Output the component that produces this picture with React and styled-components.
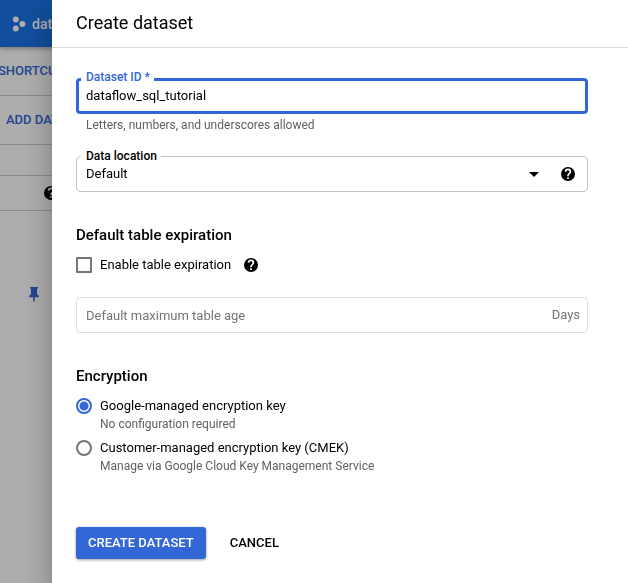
// Create dataset drawer

import React, { useState } from 'react';
import styled, { createGlobalStyle, css } from 'styled-components';

const BLUE = '#3367d6';

const GlobalStyle = createGlobalStyle`
  * {
    box-sizing: border-box;
  }

  body {
    margin: 0;
    overflow: hidden;
    background: #ffffff;
    color: #000000;
    font-family: Roboto, 'Liberation Sans', sans-serif;
    font-size: 13px;
    line-height: 18px;
  }

  button,
  input,
  select {
    font: inherit;
    color: inherit;
  }
`;

// Console page, behind the drawer

const Console = styled.div`
  min-height: 100vh;
`;

const TopBar = styled.header`
  position: relative;
  display: flex;
  align-items: center;
  height: 47px;
  padding-left: 12px;
  background: #1a73e8;
  color: #ffffff;
  box-shadow: 0 2px 4px rgba(0, 0, 0, 0.3);
`;

const ProjectButton = styled.button`
  display: flex;
  align-items: center;
  gap: 6px;
  padding: 0;
  border: 0;
  background: none;
  font-size: 14px;
  font-weight: 500;
`;

const Strip = styled.div`
  display: flex;
  align-items: center;
  height: ${({ $height }) => $height}px;
  padding-left: ${({ $indent }) => $indent || 0}px;
  border-bottom: 1px solid #cccccc;
`;

const StripLink = styled.a`
  color: ${BLUE};
  font-weight: 500;
  text-decoration: none;
`;

const Shortcuts = styled(Strip)`
  margin-left: -2px;
`;

const Resources = styled.div`
  padding: 76px 0 0 28px;
`;

const Backdrop = styled.div`
  position: fixed;
  inset: 0;
  background: rgba(0, 0, 0, 0.32);
`;

// Drawer

const Drawer = styled.form`
  position: fixed;
  inset: 0 0 0 52px;
  overflow: hidden auto;
  background: #ffffff;
  box-shadow: 0 8px 10px -5px rgba(0, 0, 0, 0.2),
    0 16px 24px 2px rgba(0, 0, 0, 0.14), 0 6px 30px 5px rgba(0, 0, 0, 0.12);
`;

const DrawerHeader = styled.header`
  display: flex;
  align-items: center;
  height: 48px;
  padding: 0 24px 2px;
  border-bottom: 1px solid #dadada;
`;

const Title = styled.h1`
  margin: 0;
  font-size: 18px;
  font-weight: 400;
  line-height: 24px;
`;

const DrawerBody = styled.div`
  padding: 30px 40px 24px 24px;
`;

const Field = styled.div`
  position: relative;
  display: flex;
  align-items: center;
  height: 36px;
  border: 1px solid #c4c4c4;
  border-radius: 4px;

  ${({ $focused }) =>
    $focused &&
    css`
      border: 3px solid ${BLUE};
    `}

  ${({ $disabled }) =>
    $disabled &&
    css`
      border-color: #e0e0e0;
      color: #757575;
    `}
`;

const FieldLabel = styled.label`
  position: absolute;
  top: ${({ $focused }) => ($focused ? -13 : -10)}px;
  left: ${({ $focused }) => ($focused ? 2 : 4)}px;
  padding: 0 4px 0 5px;
  background: #ffffff;
  color: ${({ $focused }) => ($focused ? BLUE : 'inherit')};
  font-size: 12px;
  font-weight: 500;
`;

const TextInput = styled.input`
  flex: 1;
  min-width: 0;
  height: 100%;
  padding: 0 ${({ $inset }) => $inset}px ${({ $inset }) => ($inset === 7 ? 2 : 0)}px;
  border: 0;
  outline: 0;
  background: none;

  &::placeholder {
    color: #757575;
    opacity: 1;
  }
`;

const Select = styled.select`
  flex: 1;
  min-width: 0;
  height: 100%;
  padding: 0 9px;
  border: 0;
  outline: 0;
  background: none;
  appearance: none;
`;

const SelectArrow = styled.svg`
  flex: none;
  margin-right: 22px;
  pointer-events: none;
`;

const Suffix = styled.span`
  padding-right: 7px;
`;

const Hint = styled.p`
  margin: 0;
  padding: 2px 10px 0;
  color: #616161;
  font-size: 12px;
`;

const FieldGroup = styled.div`
  display: grid;
  gap: 22px;
`;

const HelpButton = styled.button`
  display: flex;
  flex: none;
  padding: 0;
  border: 0;
  background: none;
  margin-right: ${({ $end }) => ($end ? 12 : 0)}px;
`;

const Section = styled.section`
  padding-top: 32px;
`;

const SectionTitle = styled.h2`
  margin: 0 0 10px;
  font-size: 15px;
  font-weight: 500;
  line-height: 22px;
`;

const OptionRow = styled.div`
  display: flex;
  align-items: center;
  gap: 13px;
  margin-bottom: 23px;
`;

const Option = styled.label`
  display: grid;
  grid-template-columns: 16px auto;
  align-items: center;
  column-gap: 8px;
`;

const Options = styled.div`
  display: grid;
  justify-items: start;
  gap: 6px;
`;

const OptionHint = styled.span`
  grid-column: 2;
  color: #616161;
  font-size: 12px;
`;

const Checkbox = styled.input.attrs({ type: 'checkbox' })`
  appearance: none;
  width: 16px;
  height: 16px;
  margin: 0;
  border: 2px solid #757575;
  border-radius: 1px;

  &:checked {
    border-color: ${BLUE};
    background: ${BLUE};
  }
`;

const Radio = styled.input.attrs({ type: 'radio' })`
  appearance: none;
  width: 16px;
  height: 16px;
  margin: 0;
  border: 2px solid #757575;
  border-radius: 50%;

  &:checked {
    border-color: ${BLUE};
    background: radial-gradient(circle, ${BLUE} 4px, transparent 5px);
  }
`;

const Actions = styled.div`
  display: flex;
  gap: 12px;
  padding-top: 52px;
`;

const Button = styled.button`
  height: 32px;
  padding: 0 12px;
  border: 0;
  border-radius: 3px;
  background: none;
  font-weight: 500;

  ${({ $primary }) =>
    $primary &&
    css`
      background: ${BLUE};
      color: #ffffff;
      box-shadow: 0 1px 3px rgba(0, 0, 0, 0.4);
    `}
`;

function HelpIcon() {
  return (
    <svg width="14" height="14" viewBox="0 0 20 20" aria-hidden="true">
      <path
        fillRule="evenodd"
        d="M10 0a10 10 0 1 0 0 20 10 10 0 0 0 0-20zm1.2 17H8.8v-2.4h2.4V17zm2.3-7.8-1 1c-.8.8-1.3 1.5-1.3 3H8.8v-.6c0-1.3.5-2.3 1.3-3.1l1.4-1.4c.4-.4.6-.8.6-1.4a2.1 2.1 0 0 0-4.2 0H5.4a4.6 4.6 0 0 1 9.2 0c0 1-.4 1.8-1.1 2.5z"
      />
    </svg>
  );
}

function Help({ label, end }) {
  return (
    <HelpButton type="button" aria-label={label} $end={end}>
      <HelpIcon />
    </HelpButton>
  );
}

function ProjectIcon() {
  return (
    <svg width="14" height="16" viewBox="0 0 14 16" fill="#ffffff" aria-hidden="true">
      <circle cx="3.8" cy="3.6" r="3" />
      <circle cx="3.8" cy="12.4" r="3" />
      <circle cx="10.4" cy="8" r="3" />
    </svg>
  );
}

function PinIcon() {
  return (
    <svg width="12" height="15" viewBox="0 0 12 15" fill={BLUE} aria-hidden="true">
      <path d="M2 0h8v1.6H9v5.2l1.8 2.2v1.2H6.8V14L6 15l-.8-1v-3.8h-4V9L3 6.8V1.6H2z" />
    </svg>
  );
}

export default function App() {
  const [datasetId, setDatasetId] = useState('dataflow_sql_tutorial');
  const [expires, setExpires] = useState(false);
  const [encryption, setEncryption] = useState('google');

  return (
    <>
      <GlobalStyle />
      <Console>
        <TopBar>
          <ProjectButton type="button">
            <ProjectIcon />
            data
          </ProjectButton>
        </TopBar>
        <Shortcuts $height={49}>
          <StripLink href="#shortcuts">SHORTCUTS</StripLink>
        </Shortcuts>
        <Strip $height={49} $indent={6}>
          <StripLink href="#add">ADD DATA</StripLink>
        </Strip>
        <Strip $height={31} />
        <Strip $height={35} $indent={44}>
          <HelpIcon />
        </Strip>
        <Resources>
          <PinIcon />
        </Resources>
      </Console>
      <Backdrop />

      <Drawer onSubmit={(e) => e.preventDefault()}>
        <DrawerHeader>
          <Title>Create dataset</Title>
        </DrawerHeader>
        <DrawerBody>
          <FieldGroup>
            <div>
              <Field $focused>
                <FieldLabel htmlFor="dataset-id" $focused>
                  Dataset ID *
                </FieldLabel>
                <TextInput
                  id="dataset-id"
                  $inset={7}
                  value={datasetId}
                  onChange={(e) => setDatasetId(e.target.value)}
                />
              </Field>
              <Hint>Letters, numbers, and underscores allowed</Hint>
            </div>
            <Field>
              <FieldLabel htmlFor="location">Data location</FieldLabel>
              <Select id="location">
                <option>Default</option>
              </Select>
              <SelectArrow width="10" height="5" viewBox="0 0 10 5" aria-hidden="true">
                <path d="M0 0h10L5 5z" />
              </SelectArrow>
              <Help label="About data location" end />
            </Field>
          </FieldGroup>

          <Section>
            <SectionTitle>Default table expiration</SectionTitle>
            <OptionRow>
              <Option>
                <Checkbox checked={expires} onChange={(e) => setExpires(e.target.checked)} />
                Enable table expiration
              </Option>
              <Help label="About table expiration" />
            </OptionRow>
            <Field $disabled={!expires}>
              <TextInput
                $inset={9}
                aria-label="Default maximum table age"
                placeholder="Default maximum table age"
                disabled={!expires}
              />
              <Suffix>Days</Suffix>
            </Field>
          </Section>

          <Section>
            <SectionTitle>Encryption</SectionTitle>
            <Options>
              <Option>
                <Radio
                  name="encryption"
                  checked={encryption === 'google'}
                  onChange={() => setEncryption('google')}
                />
                Google-managed encryption key
                <OptionHint>No configuration required</OptionHint>
              </Option>
              <Option>
                <Radio
                  name="encryption"
                  checked={encryption === 'customer'}
                  onChange={() => setEncryption('customer')}
                />
                Customer-managed encryption key (CMEK)
                <OptionHint>Manage via Google Cloud Key Management Service</OptionHint>
              </Option>
            </Options>
          </Section>

          <Actions>
            <Button type="submit" $primary>
              CREATE DATASET
            </Button>
            <Button type="button">CANCEL</Button>
          </Actions>
        </DrawerBody>
      </Drawer>
    </>
  );
}
